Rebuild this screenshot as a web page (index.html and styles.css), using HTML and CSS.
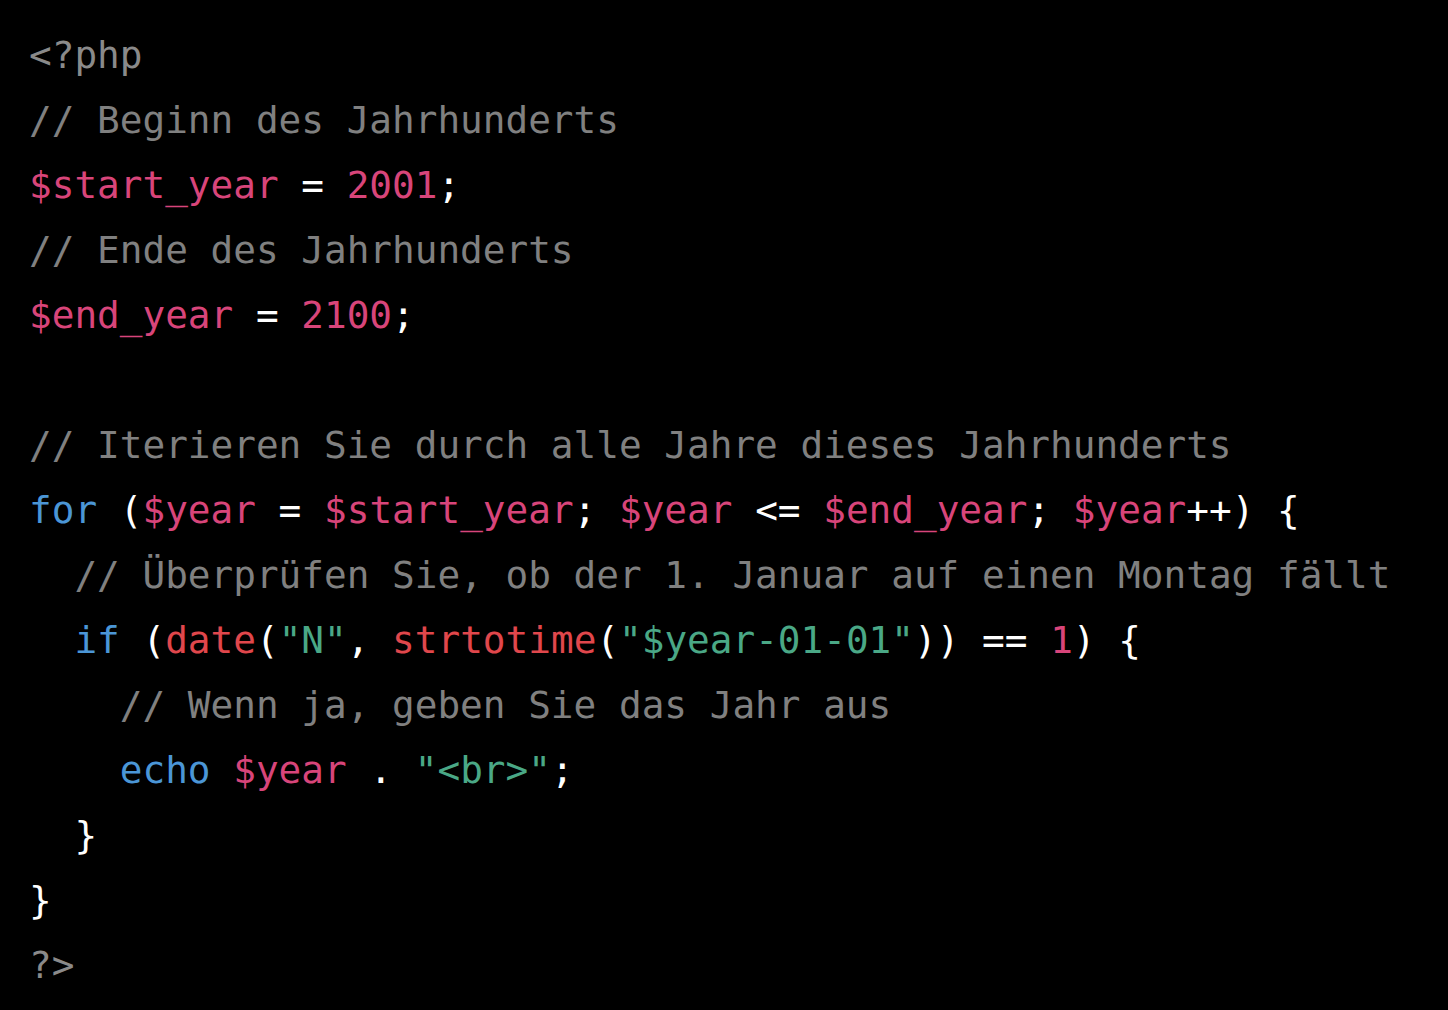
FILE: index.html
```html
<!DOCTYPE html>
<html lang="de">
<head>
<meta charset="utf-8">
<title>PHP</title>
<link rel="stylesheet" href="styles.css">
</head>
<body>
<pre class="code"><code><span class="tag">&lt;?php</span>
<span class="cm">// Beginn des Jahrhunderts</span>
<span class="var">$start_year</span> = <span class="num">2001</span>;
<span class="cm">// Ende des Jahrhunderts</span>
<span class="var">$end_year</span> = <span class="num">2100</span>;

<span class="cm">// Iterieren Sie durch alle Jahre dieses Jahrhunderts</span>
<span class="kw">for</span> (<span class="var">$year</span> = <span class="var">$start_year</span>; <span class="var">$year</span> &lt;= <span class="var">$end_year</span>; <span class="var">$year</span>++) {
  <span class="cm">// Überprüfen Sie, ob der 1. Januar auf einen Montag fällt</span>
  <span class="kw">if</span> (<span class="fn">date</span>(<span class="str">"N"</span>, <span class="fn">strtotime</span>(<span class="str">"$year-01-01"</span>)) == <span class="num">1</span>) {
    <span class="cm">// Wenn ja, geben Sie das Jahr aus</span>
    <span class="kw">echo</span> <span class="var">$year</span> . <span class="str">"&lt;br&gt;"</span>;
  }
}
<span class="tag">?&gt;</span></code></pre>
</body>
</html>
```

FILE: styles.css
```css
html, body {
  margin: 0;
  padding: 0;
  background: #000;
}

.code {
  margin: 0;
  padding: 23px 29px;
  font-family: "DejaVu Sans Mono", "Liberation Mono", monospace;
  font-size: 37.7px;
  line-height: 65px;
  color: #ffffff;
  white-space: pre;
}

.tag { color: #8a8a8a; }
.cm { color: #808080; }
.var { color: #d8457a; }
.num { color: #d8457a; }
.kw { color: #4b96d6; }
.fn { color: #e0474c; }
.str { color: #4aa886; }
```
